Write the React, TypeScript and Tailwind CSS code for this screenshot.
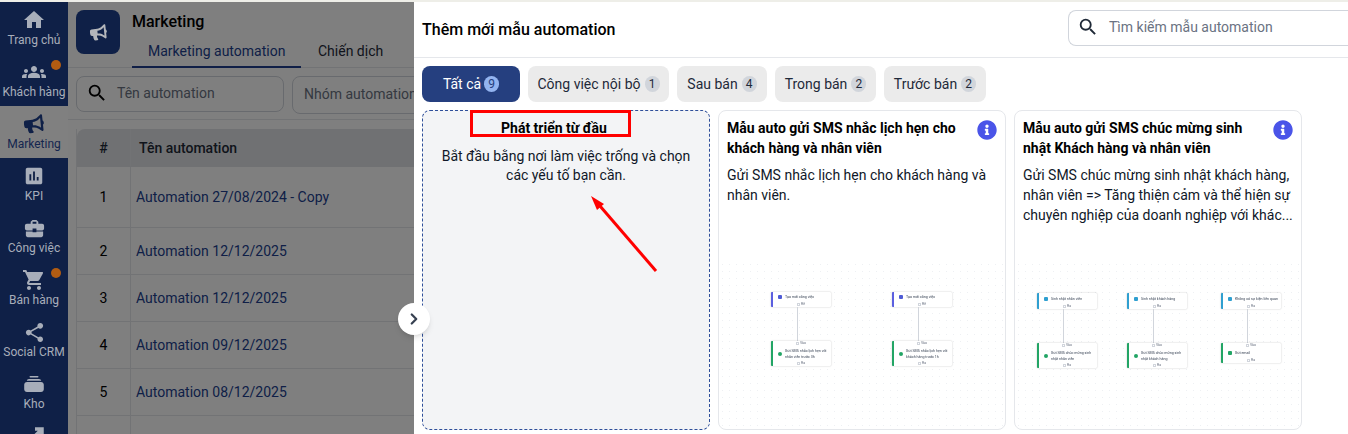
import { ChevronRight } from "lucide-react";
import { FaBullhorn, FaInfoCircle } from "react-icons/fa";
import {
  MdAssessment,
  MdBusinessCenter,
  MdGroups,
  MdHome,
  MdSearch,
  MdShare,
  MdShoppingCart,
} from "react-icons/md";
import type { ReactNode } from "react";

function StackIcon() {
  return (
    <svg width="20" height="20" viewBox="0 0 20 20" fill="currentColor">
      <rect x="5.500" y="2" width="9" height="1.600" rx="0.800" />
      <path d="M5 5h10c1.200 0 2 .8 2.200 1.800H2.800C3 5.800 3.800 5 5 5z" />
      <path d="M3 8h14c1.600 0 2.800 1.200 2.800 2.800v4.400c0 1.600-1.200 2.800-2.800 2.800H3c-1.600 0-2.800-1.200-2.800-2.800v-4.400C.2 9.200 1.400 8 3 8z" />
    </svg>
  );
}

function ExpandIcon() {
  return (
    <svg width="20" height="20" viewBox="0 0 20 20" fill="none" stroke="currentColor" strokeWidth="3.500">
      <path d="M11 3h7v7M18 3l-8 8M3 9v9h8" />
    </svg>
  );
}

const menu: { label: string; icon: ReactNode; dot?: boolean; active?: boolean }[] = [
  { label: "Trang chủ", icon: <MdHome size={24} /> },
  { label: "Khách hàng", icon: <MdGroups size={24} />, dot: true },
  { label: "Marketing", icon: <FaBullhorn size={20} className="-rotate-6 text-[#0f2047]" />, active: true },
  { label: "KPI", icon: <MdAssessment size={22} /> },
  { label: "Công việc", icon: <MdBusinessCenter size={23} /> },
  { label: "Bán hàng", icon: <MdShoppingCart size={24} />, dot: true },
  { label: "Social CRM", icon: <MdShare size={23} /> },
  { label: "Kho", icon: <StackIcon /> },
  { label: "", icon: <ExpandIcon /> },
];

const rows = [
  { no: 2, name: "Automation 12/12/2025" },
  { no: 3, name: "Automation 12/12/2025" },
  { no: 4, name: "Automation 09/12/2025" },
  { no: 5, name: "Automation 08/12/2025" },
];

const tabs = [
  { label: "Công việc nội bộ", count: 1, width: "w-[141px]" },
  { label: "Sau bán", count: 4, width: "w-[90px]" },
  { label: "Trong bán", count: 2, width: "w-[101px]" },
  { label: "Trước bán", count: 2, width: "w-[102px]" },
];

function Sidebar() {
  return (
    <div className="relative z-10 w-[68px] shrink-0 bg-[#0f2047]">
      {menu.map((item, i) => (
        <div
          key={i}
          className={`relative flex h-[52px] flex-col items-center justify-start pt-[6px] text-xs leading-[16px] ${
            item.active ? "bg-[#808080] text-[#14264f]" : "text-[#a8aeba]"
          }`}
        >
          <div className="flex h-[24px] items-center">{item.icon}</div>
          <span className="whitespace-nowrap">{item.label}</span>
          {item.dot && <span className="absolute right-[7px] top-[6px] h-[10px] w-[10px] rounded-full bg-[#b25c12]" />}
        </div>
      ))}
    </div>
  );
}

function Background() {
  return (
    <div className="relative flex h-[432px] w-[414px] shrink-0 overflow-hidden bg-white">
      <Sidebar />
      <div className="min-w-0 flex-1">
        {/* Header */}
        <div className="flex h-[66px] gap-3 border-b border-gray-200 px-2 pt-2">
          <div className="relative z-10 flex h-11 w-11 shrink-0 items-center justify-center rounded-lg bg-[#0f2047] text-[#b4b6bb]">
            <FaBullhorn size={17} className="-rotate-6" />
          </div>
          <div className="min-w-0 flex-1">
            <div className="mt-[2px] text-base font-medium leading-[20px] text-black">Marketing</div>
            <div className="mt-[9px] flex text-sm leading-[20px]">
              <div className="w-[169px] border-b-2 border-[#213f8f] pb-[5px] pl-4 text-[#213f8f]">Marketing automation</div>
              <div className="pl-[17px] text-gray-800">Chiến dịch</div>
            </div>
          </div>
        </div>

        {/* Filters */}
        <div className="flex h-[52px] gap-2 overflow-hidden border-b border-gray-200 pl-2 pt-[8px]">
          <div className="flex h-9 w-[208px] shrink-0 items-center rounded-lg border border-gray-300 pb-[2px] pl-[9px] text-sm text-gray-500">
            <MdSearch size={22} className="text-black" />
            <span className="ml-[9px]">Tên automation</span>
          </div>
          <div className="flex h-[38px] w-[200px] shrink-0 items-center rounded-lg border border-gray-300 pb-[2px] pl-[11px] text-sm text-gray-500">
            Nhóm automation
          </div>
        </div>

        {/* Table */}
        <div className="ml-2 mt-[9px] border-l border-gray-200 text-sm">
          <div className="flex h-[38px] items-center rounded-tl-lg bg-[#e0e2e6] pb-[1px] font-medium text-[#1f2937]">
            <div className="flex h-full w-[54px] items-center justify-center border-r border-gray-200">#</div>
            <div className="pl-2">Tên automation</div>
          </div>
          <div className="flex h-[61px] border-b border-gray-200">
            <div className="flex w-[54px] items-center justify-center border-r border-gray-200 text-black">1</div>
            <div className="flex items-center pl-[5px] text-[#213f8f]">Automation 27/08/2024 - Copy</div>
          </div>
          {rows.map((row) => (
            <div key={row.no} className="flex h-[47px] border-b border-gray-200">
              <div className="flex w-[54px] items-center justify-center border-r border-gray-200 text-black">{row.no}</div>
              <div className="flex items-center pl-[5px] text-[#213f8f]">{row.name}</div>
            </div>
          ))}
          <div className="flex h-[47px]">
            <div className="w-[54px] border-r border-gray-200" />
          </div>
        </div>
      </div>
      <div className="absolute inset-0 bg-black/50" />
    </div>
  );
}

type FlowNode = { title: string[]; from?: string; to: string; color: string; dot: string };

function Handle({ label }: { label: string }) {
  return (
    <div className="flex h-[5px] items-center justify-center gap-[1px] pr-[2px] text-[3.5px] leading-[5px] text-gray-500">
      <span className="h-[3px] w-[3px] border-[0.5px] border-gray-300" />
      {label}
    </div>
  );
}

function Node({ node, tall }: { node: FlowNode; tall?: boolean }) {
  return (
    <div className={`flex w-full flex-col rounded-[1px] border-l-2 bg-white shadow-[0_0_1.5px_rgba(0,0,0,0.3)] ${node.color}`}>
      {node.from && <Handle label={node.from} />}
      <div
        className={`flex items-center gap-[3px] pl-[5px] text-[3.6px] leading-[6px] text-gray-700 ${
          node.title.length > 1 ? "h-[15px]" : tall ? "h-[11px]" : "h-[10px]"
        }`}
      >
        <span className={`h-[4px] w-[4px] shrink-0 rounded-[1px] ${node.dot}`} />
        <div className="whitespace-nowrap">
          {node.title.map((t) => (
            <div key={t}>{t}</div>
          ))}
        </div>
      </div>
      <Handle label={node.to} />
    </div>
  );
}

function Flow({ top, bottom, tall, className }: { top: FlowNode; bottom: FlowNode; tall?: boolean; className?: string }) {
  return (
    <div className={`flex w-[60px] flex-col items-center ${className ?? ""}`}>
      <Node node={top} tall={tall} />
      <div className="mr-[7px] h-[34px] w-[1.5px] bg-gray-300" />
      <Node node={bottom} />
    </div>
  );
}

function Template({
  title,
  desc,
  children,
  layout,
}: {
  title: string[];
  desc: string[];
  children: ReactNode;
  layout: string;
}) {
  return (
    <div className="relative flex h-[320px] w-[288px] shrink-0 flex-col rounded-lg border border-gray-200 bg-white px-2 pt-[7px]">
      <FaInfoCircle size={20} className="absolute right-[8px] top-[9px] text-[#4a54e8]" />
      <div className="text-sm font-bold leading-[20px] text-black">
        {title.map((t) => (
          <div key={t}>{t}</div>
        ))}
      </div>
      <div className="mt-[7px] text-sm leading-[20px] text-gray-900">
        {desc.map((t) => (
          <div key={t} className="whitespace-nowrap">{t}</div>
        ))}
      </div>
      <div
        className={`absolute inset-x-0 bottom-0 top-[150px] flex rounded-b-lg bg-[radial-gradient(#eef0f3_0.6px,transparent_0.7px)] bg-[length:7px_7px] blur-[0.3px] ${layout}`}
      >
        {children}
      </div>
    </div>
  );
}

const violet = { color: "border-[#5b5fe0]", dot: "bg-[#4f5bd5]" };
const sky = { color: "border-[#2f9fd0]", dot: "bg-[#2f9fd0]" };
const green = { color: "border-[#22a565]", dot: "bg-[#22a565] rounded-full" };

const sms1 = [
  {
    top: { title: ["Tạo mới công việc"], to: "Rẽ", ...violet },
    bottom: { title: ["Gửi SMS nhắc lịch hẹn với", "nhân viên trước 3h"], from: "Vào", to: "Ra", ...green },
  },
  {
    top: { title: ["Tạo mới công việc"], to: "Rẽ", ...violet },
    bottom: { title: ["Gửi SMS nhắc lịch hẹn với", "khách hàng trước 1h"], from: "Vào", to: "Ra", ...green },
  },
];

const sms2 = [
  {
    top: { title: ["Sinh nhật nhân viên"], to: "Ra", ...sky },
    bottom: { title: ["Gửi SMS chúc mừng sinh", "nhật nhân viên"], from: "Vào", to: "Ra", ...green },
  },
  {
    top: { title: ["Sinh nhật khách hàng"], to: "Ra", ...sky },
    bottom: { title: ["Gửi SMS chúc mừng sinh", "nhật khách hàng"], from: "Vào", to: "Ra", ...green },
  },
  {
    top: { title: ["Không có sự kiện liên quan"], to: "Ra", ...sky },
    bottom: { title: ["Gửi email"], from: "Vào", to: "Ra", color: "border-[#22a565]", dot: "bg-[#22a565]" },
  },
];

function Panel() {
  return (
    <div className="h-[432px] min-w-0 flex-1 overflow-hidden bg-white">
      {/* Header */}
      <div className="flex h-[56px] items-start justify-between border-b border-gray-200 pl-2 pt-[8px]">
        <div className="mt-[10px] text-base font-medium leading-[20px] text-black">Thêm mới mẫu automation</div>
        <div className="flex h-9 w-[280px] items-center rounded-l-lg border border-r-0 border-gray-300 pb-[2px] pl-[8px] text-sm text-gray-500">
          <MdSearch size={22} className="text-[#1f2937]" />
          <span className="ml-[10px]">Tìm kiếm mẫu automation</span>
        </div>
      </div>

      {/* Tabs */}
      <div className="flex gap-2 pl-2 pt-[8px] text-sm">
        <div className="flex h-9 w-[98px] items-center justify-center gap-[3px] rounded-lg bg-[#253f7f] text-white">
          Tất cả
          <span className="flex h-[16px] w-[15px] items-center justify-center rounded-full bg-[#93b4f0] text-xs text-[#253f7f]">9</span>
        </div>
        {tabs.map((tab) => (
          <div key={tab.label} className={`flex h-9 items-center justify-center gap-[4px] rounded-lg bg-[#ebebeb] text-gray-800 ${tab.width}`}>
            {tab.label}
            <span className="flex h-[16px] w-[15px] items-center justify-center rounded-full bg-[#d1d5db] text-xs text-gray-800">{tab.count}</span>
          </div>
        ))}
      </div>

      {/* Cards */}
      <div className="mt-2 flex gap-2 pl-2">
        <div className="h-[320px] w-[288px] shrink-0 rounded-lg border border-dashed border-[#2f4f9a] bg-[#f3f4f6] px-4 pt-[7px] text-center">
          <div className="pr-6 text-sm font-bold leading-[20px] text-black">Phát triển từ đầu</div>
          <div className="mt-[9px] text-sm leading-[19px] text-gray-900">
            Bắt đầu bằng nơi làm việc trống và chọn
            <br />
            các yếu tố bạn cần.
          </div>
        </div>
        <Template
          title={["Mẫu auto gửi SMS nhắc lịch hẹn cho", "khách hàng và nhân viên"]}
          desc={["Gửi SMS nhắc lịch hẹn cho khách hàng và", "nhân viên."]}
          layout="gap-[61px] pl-[52px] pt-[31px]"
        >
          {sms1.map((f, i) => (
            <Flow key={i} top={f.top} bottom={f.bottom} />
          ))}
        </Template>
        <Template
          title={["Mẫu auto gửi SMS chúc mừng sinh", "nhật Khách hàng và nhân viên"]}
          desc={["Gửi SMS chúc mừng sinh nhật khách hàng,", "nhân viên => Tăng thiện cảm và thể hiện sự", "chuyên nghiệp của doanh nghiệp với khác..."]}
          layout="gap-[30px] pl-[22px] pt-[32px]"
        >
          {sms2.map((f, i) => (
            <Flow key={i} top={f.top} bottom={f.bottom} tall className={i === 2 ? "ml-[4px]" : ""} />
          ))}
        </Template>
      </div>
    </div>
  );
}

export default function App() {
  return (
    <div className="relative h-[434px] w-[1348px] overflow-hidden font-['Roboto',sans-serif]">
      <div className="h-[2px] bg-[#eeeee8]" />
      <div className="flex">
        <Background />
        <Panel />
      </div>

      {/* Collapse button */}
      <div className="absolute left-[398px] top-[303px] z-20 flex h-8 w-8 items-center justify-center rounded-full bg-white text-[#374151] shadow-md">
        <ChevronRight size={18} strokeWidth={3} />
      </div>

      {/* Annotation */}
      <div className="absolute left-[470px] top-[110px] h-[27px] w-[161px] border-[3px] border-[#ff0000]" />
      <svg className="absolute left-[580px] top-[190px]" width="90" height="90" viewBox="0 0 90 90" fill="none">
        <path d="M76 81 20 16" stroke="#ff0000" strokeWidth="3" />
        <path d="M11 6 24 14 17 20Z" fill="#ff0000" />
      </svg>
    </div>
  );
}
